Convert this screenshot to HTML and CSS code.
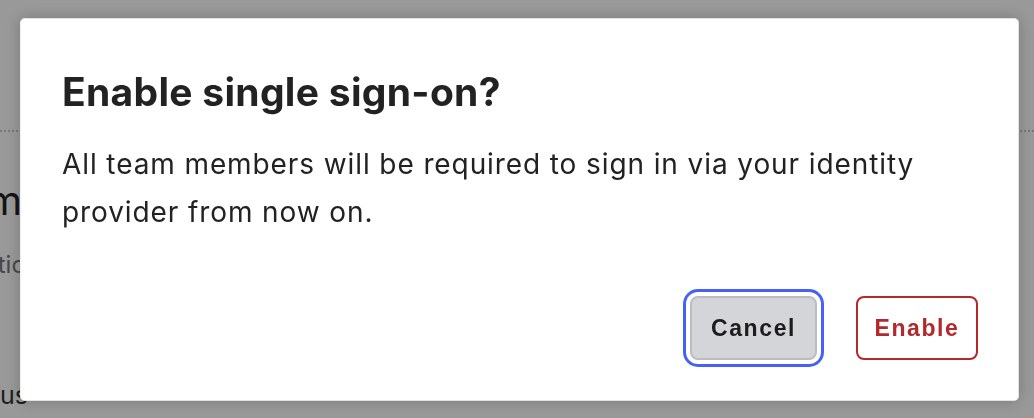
FILE: index.html
```html
<!DOCTYPE html>
<html lang="en">
<head>
<meta charset="utf-8">
<title>Enable single sign-on?</title>
<link rel="stylesheet" href="styles.css">
</head>
<body>
<div class="page">
  <div class="page-col">
    <div class="rule"></div>
    <h2 class="page-title">Team</h2>
    <p class="page-sub">Authentication</p>
    <p class="page-row">Status</p>
  </div>
</div>
<div class="overlay">
  <div class="dialog" role="dialog" aria-labelledby="dlg-title">
    <h1 class="dialog-title" id="dlg-title">Enable single sign-on?</h1>
    <p class="dialog-body">All team members will be required to sign in via your identity provider from now on.</p>
    <div class="dialog-actions">
      <button class="btn btn-cancel" type="button">Cancel</button>
      <button class="btn btn-enable" type="button">Enable</button>
    </div>
  </div>
</div>
</body>
</html>
```
FILE: styles.css
```css
html, body {
  margin: 0;
  padding: 0;
  width: 1034px;
  height: 418px;
  overflow: hidden;
  background: #ffffff;
  font-family: Inter, "Noto Sans", sans-serif;
}

.page {
  height: 418px;
}

.page-col {
  width: 20px;
  display: flex;
  flex-direction: column;
  align-items: flex-end;
  padding-top: 130px;
}

.rule {
  width: 1034px;
  border-top: 2px dotted #c8c8c8;
  align-self: flex-start;
}

.page-title {
  margin: 45px -2px 0 0;
  font-size: 40px;
  font-weight: 400;
  line-height: 48px;
  color: #222;
  white-space: nowrap;
}

.page-sub {
  margin: 24px -20px 0 0;
  font-size: 24px;
  line-height: 32px;
  color: #777;
  white-space: nowrap;
}

.page-row {
  margin: 98px -8px 0 0;
  font-size: 25px;
  line-height: 32px;
  color: #333;
  white-space: nowrap;
}

.overlay {
  position: fixed;
  inset: 0;
  background: rgba(0, 0, 0, 0.4);
  padding: 18px 15px 17px 20px;
  box-sizing: border-box;
}

.dialog {
  width: 999px;
  height: 383px;
  box-sizing: border-box;
  background: #fff;
  border: 1px solid #e2e2e2;
  border-left-color: #f0f0f0;
  border-radius: 5px;
  box-shadow: 0 0 16px rgba(0, 0, 0, 0.22);
  padding: 50px 40px 40px 41px;
  display: flex;
  flex-direction: column;
}

.dialog-title {
  margin: 0;
  font-size: 39px;
  line-height: 46px;
  font-weight: 700;
  color: #222;
  letter-spacing: 0.3px;
}

.dialog-body {
  margin: 25px 0 0 0;
  font-size: 28px;
  line-height: 48px;
  color: #222;
  letter-spacing: 0.9px;
  max-width: 880px;
}

.dialog-actions {
  margin-top: auto;
  display: flex;
  justify-content: flex-end;
  gap: 39px;
}

.btn {
  font-family: "Liberation Sans", Arial, sans-serif;
  font-weight: 700;
  font-size: 23px;
  letter-spacing: 1.6px;
  height: 64px;
  padding: 0;
  text-align: center;
  border-radius: 8px;
  cursor: pointer;
}

.btn-cancel {
  width: 127px;
  background: #d4d5d8;
  border: 2px solid #bcbdc0;
  color: #1c1c1c;
  box-shadow: 0 0 0 4px #fff, 0 0 0 7px #4660f8;
}

.btn-enable {
  width: 122px;
  background: #fff;
  border: 2px solid #b3292b;
  color: #b3292b;
}
```
